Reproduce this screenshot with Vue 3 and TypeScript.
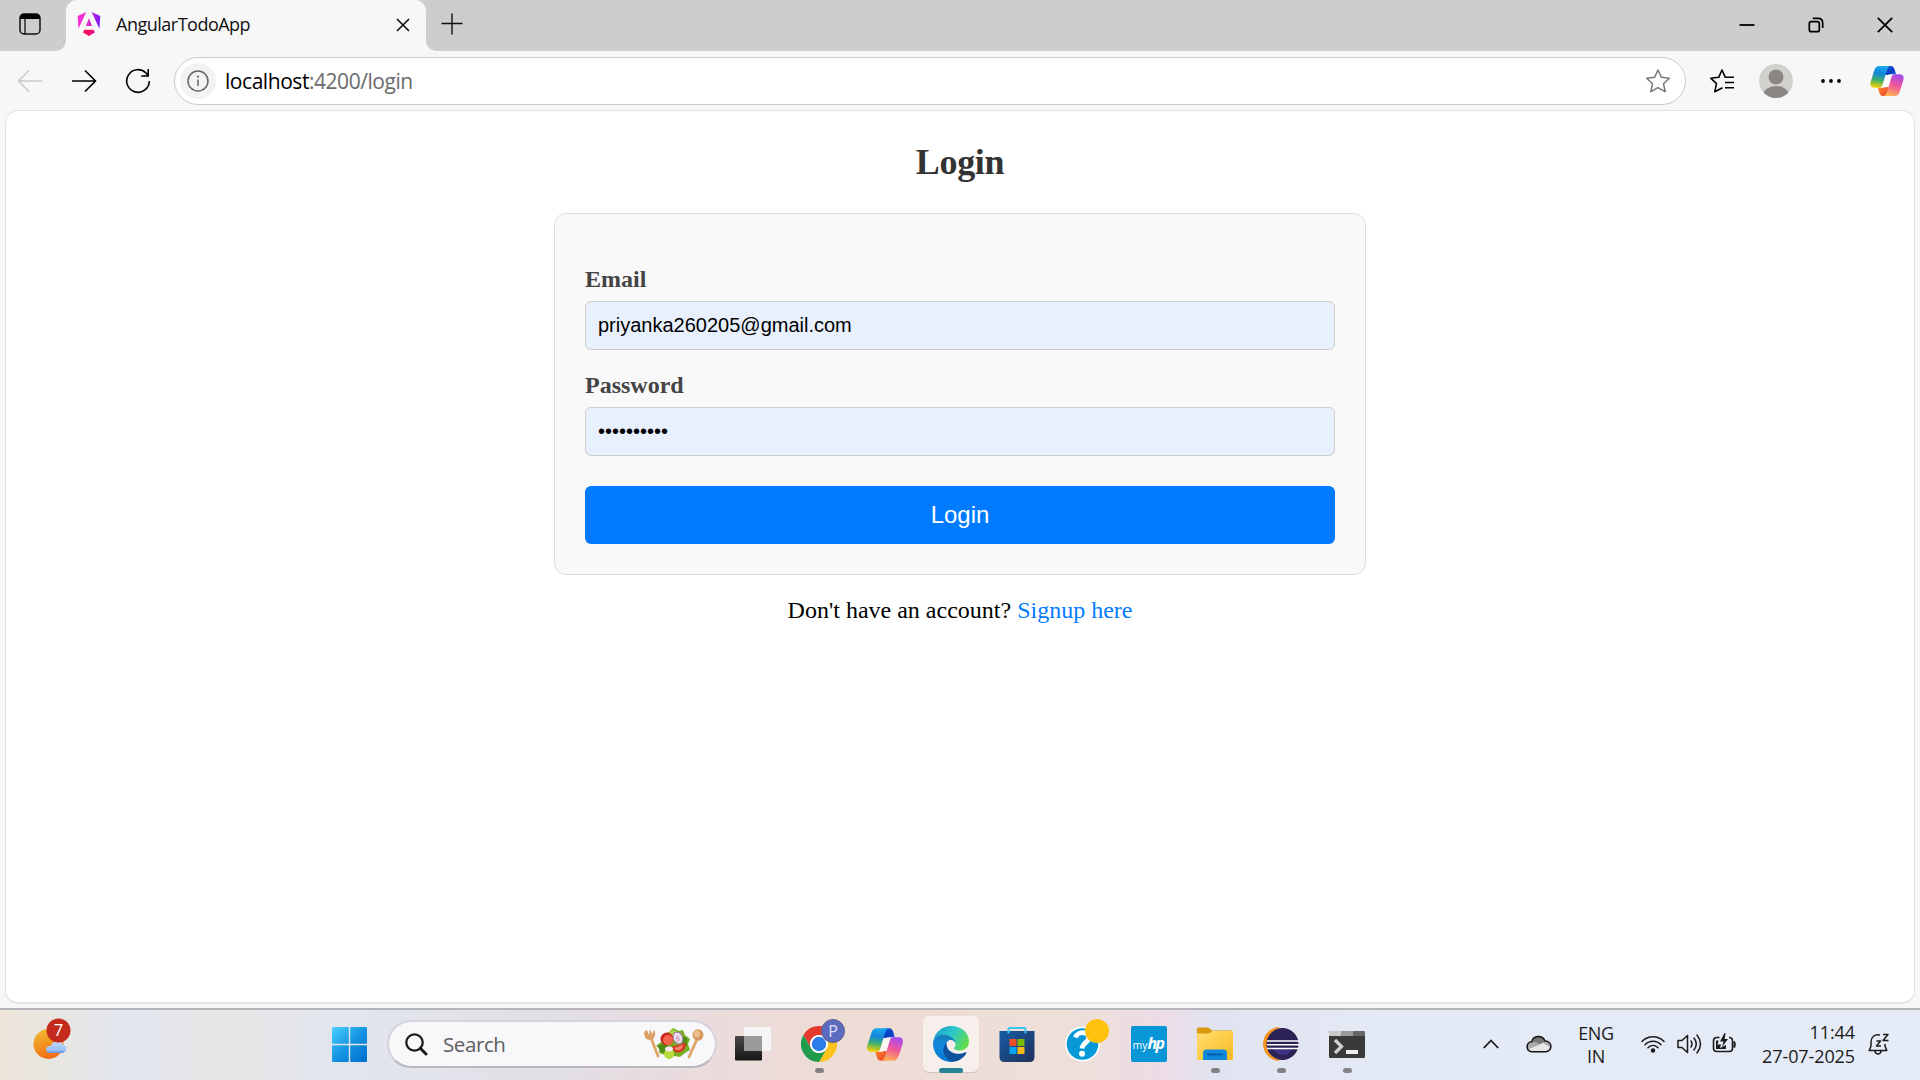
<script setup lang="ts">
import { ref } from 'vue'

const email = ref('priyanka260205@gmail.com')
const password = ref('••••••••••')
const tabTitle = 'AngularTodoApp'
const clock = { time: '11:44', date: '27-07-2025' }
</script>

<template>
  <div class="screen">
    <svg class="defs" width="0" height="0" aria-hidden="true">
      <defs>
        <linearGradient id="cpA" x1=".5" y1="0" x2=".35" y2="1">
          <stop offset="0" stop-color="#1ba7f0" /><stop offset=".35" stop-color="#1486d8" />
          <stop offset=".65" stop-color="#3fb06f" /><stop offset="1" stop-color="#f5d000" />
        </linearGradient>
        <linearGradient id="cpB" x1=".7" y1="0" x2=".4" y2="1">
          <stop offset="0" stop-color="#a34df0" /><stop offset=".5" stop-color="#f0569a" /><stop offset="1" stop-color="#ffb057" />
        </linearGradient>
        <linearGradient id="cpC" x1="0" y1="0" x2="1" y2="1">
          <stop offset="0" stop-color="#1358dc" /><stop offset=".6" stop-color="#0a3fc4" /><stop offset="1" stop-color="#1c5be0" />
        </linearGradient>
        <linearGradient id="cpD" x1="0" y1="0" x2="1" y2="1">
          <stop offset="0" stop-color="#ff8a2a" /><stop offset="1" stop-color="#e6392f" />
        </linearGradient>
        <symbol id="copilot" viewBox="0 0 100 90">
          <path fill="#fff" fill-opacity=".75" d="M48 26H68L54 65H34Z" />
          <path fill="url(#cpC)" d="M46 0H62C70 0 73 8 77 25H66C60 25 56 25 53 27L44 26Z" />
          <path fill="url(#cpD)" d="M54 90H38C30 90 27 82 23 65H34C40 65 44 65 47 63L56 64Z" />
          <path fill="url(#cpA)" d="M28 0H62C55 0 52 8 49 15L38 52C35 62 33 65 26 65H12C2 65-2 58 1 47L12 13C15 4 19 0 28 0Z" />
          <path fill="url(#cpB)" d="M72 90H38C45 90 48 82 51 75L62 38C65 28 67 25 74 25H88C98 25 102 32 99 43L88 77C85 86 81 90 72 90Z" />
        </symbol>
      </defs>
    </svg>

    <header class="titlebar">
      <div class="workspaces">
        <svg width="22" height="22" viewBox="0 0 22 22"><rect x="1" y="1" width="20" height="20" rx="4" fill="none" stroke="#111" stroke-width="1.5" /><path d="M1 6V4.5Q1 1 4.500 1H17.500Q21 1 21 4.500V6Z" fill="#000" /><path d="M6 6V21" stroke="#111" stroke-width="1.300" /></svg>
      </div>
      <div class="tab">
        <svg class="favicon" width="24" height="24" viewBox="0 0 223 236">
          <defs><linearGradient id="ngA" x1="0" y1=".4" x2="1" y2=".5"><stop offset="0" stop-color="#fb2fd4" /><stop offset=".5" stop-color="#e02ad0" /><stop offset="1" stop-color="#7716fa" /></linearGradient><linearGradient id="ngB" x1="0" y1="0" x2="1" y2=".4"><stop offset="0" stop-color="#f0087a" /><stop offset=".4" stop-color="#ff1052" /><stop offset="1" stop-color="#e20d92" /></linearGradient></defs>
          <path fill="url(#ngA)" d="m222.077 39.192-8.019 125.923L137.387 0l84.690 39.192ZM111.039 62.675l30.357 73.803H80.681l30.358-73.803ZM7.937 165.115 0 39.192 84.690 0 7.937 165.115Z" />
          <path fill="url(#ngB)" d="m168.972 202.017-57.933 33.056-57.934-33.056 11.783-28.556h92.301l11.783 28.556Z" />
        </svg>
        <span class="tab-title">{{ tabTitle }}</span>
        <svg class="tab-close" width="14" height="14" viewBox="0 0 14 14"><path d="M1 1 13 13M13 1 1 13" stroke="#111" stroke-width="1.600" /></svg>
      </div>
      <svg class="new-tab" width="22" height="22" viewBox="0 0 22 22"><path d="M11 .5V21.500M.5 10.500H21.500" stroke="#111" stroke-width="1.400" /></svg>
      <div class="window-controls">
        <svg width="16" height="16" viewBox="0 0 16 16"><path d="M.5 8H15.500" stroke="#000" stroke-width="1.800" /></svg>
        <svg width="16" height="16" viewBox="0 0 16 16" fill="none" stroke="#000" stroke-width="1.700"><rect x="1.300" y="4.700" width="10" height="10" rx="2" /><path d="M4.800 1.300H10Q14.700 1.300 14.700 6V11" /></svg>
        <svg width="16" height="16" viewBox="0 0 16 16"><path d="M.8.8 15.200 15.200M15.200.8.8 15.200" stroke="#000" stroke-width="1.800" /></svg>
      </div>
    </header>

    <nav class="toolbar">
      <div class="nav-buttons">
        <svg width="26" height="24" viewBox="0 0 26 24" fill="none" stroke="#c9c9c9" stroke-width="1.500"><path d="M25 12H1.500M12 1.500 1.500 12 12 22.500" /></svg>
        <svg width="26" height="24" viewBox="0 0 26 24" fill="none" stroke="#000" stroke-width="1.600"><path d="M1 12H24.500M14 1.500 24.500 12 14 22.500" /></svg>
        <svg width="26" height="26" viewBox="0 0 26 26" fill="none" stroke="#000" stroke-width="1.600"><path d="M24.300 13A11.300 11.300 0 1 1 21 5L23 7.500M23.200 1V8H16.200" /></svg>
      </div>
      <div class="address">
        <span class="site-info"><svg width="22" height="22" viewBox="0 0 22 22"><circle cx="11" cy="11" r="10" fill="none" stroke="#666" stroke-width="1.500" /><circle cx="11" cy="6.700" r="1.100" fill="#666" /><path d="M11 9.500V16" stroke="#666" stroke-width="1.500" /></svg></span>
        <span class="url"><b>localhost</b>:4200/login</span>
        <svg class="star" width="26" height="26" viewBox="0 0 26 26" fill="none" stroke="#767676" stroke-width="1.500" stroke-linejoin="round"><path d="M13 2 16.300 9.300 24.300 10.200 18.500 15.700 20.200 23.700 13 19.700 5.800 23.700 7.500 15.700 1.700 10.200 9.700 9.300Z" /></svg>
      </div>
      <div class="toolbar-actions">
        <svg width="26" height="26" viewBox="0 0 26 26" fill="none" stroke="#000" stroke-width="1.600" stroke-linejoin="round"><path d="M25 9.300H16.300L13 2 9.700 9.300 1.700 10.200 7.500 15.700 5.800 23.700 13.500 19.700M16 14.500H25M16 19.700H25" /></svg>
        <svg width="34" height="34" viewBox="0 0 34 34"><defs><clipPath id="avatarClip"><circle cx="17" cy="17" r="17" /></clipPath></defs><g clip-path="url(#avatarClip)"><rect width="34" height="34" fill="#d2d0cd" /><circle cx="17" cy="13" r="7.500" fill="#8a8683" /><ellipse cx="17" cy="31" rx="13" ry="9" fill="#8a8683" /></g></svg>
        <svg width="20" height="4" viewBox="0 0 20 4"><circle cx="2" cy="2" r="1.900" /><circle cx="10" cy="2" r="1.900" /><circle cx="18" cy="2" r="1.900" /></svg>
        <svg width="34" height="30"><use href="#copilot" /></svg>
      </div>
    </nav>

    <main class="viewport">
      <h2>Login</h2>
      <form class="card" @submit.prevent>
        <label for="email">Email</label>
        <input id="email" v-model="email" type="text" />
        <label for="password">Password</label>
        <input id="password" v-model="password" type="text" />
        <button type="submit">Login</button>
      </form>
      <p class="signup">Don't have an account? <a href="#">Signup here</a></p>
    </main>

    <footer class="taskbar">
      <div class="widgets">
        <svg width="40" height="44" viewBox="0 0 40 44">
          <defs><linearGradient id="sun" x1=".3" y1="0" x2=".6" y2="1"><stop offset="0" stop-color="#f0b92e" /><stop offset="1" stop-color="#f36c12" /></linearGradient><linearGradient id="cl" x1="0" y1="0" x2="0" y2="1"><stop offset="0" stop-color="#c1dcff" /><stop offset=".75" stop-color="#9cc0f7" /><stop offset="1" stop-color="#688fdc" /></linearGradient></defs>
          <circle cx="15.500" cy="26" r="15" fill="url(#sun)" /><path fill="url(#cl)" d="M17 35C11 35 12 27 18 28C20 21 29 22 30 27C35 27 34 35 29 35Z" />
          <circle cx="25.500" cy="12.500" r="12" fill="#c42b1c" />
          <text x="25.500" y="18" text-anchor="middle" fill="#fff" font-size="16.500" font-family="Open Sans, sans-serif">7</text>
        </svg>
      </div>
      <div class="slot start">
        <svg width="35" height="35" viewBox="0 0 35 35"><defs><linearGradient id="win" gradientUnits="userSpaceOnUse" x1="0" y1="0" x2="32" y2="32"><stop offset="0" stop-color="#4bd2ff" /><stop offset=".55" stop-color="#1594e2" /><stop offset="1" stop-color="#0074d0" /></linearGradient></defs><g fill="url(#win)"><rect width="16.800" height="16.800" rx="1" /><rect x="18.200" width="16.800" height="16.800" rx="1" /><rect y="18.200" width="16.800" height="16.800" rx="1" /><rect x="18.200" y="18.200" width="16.800" height="16.800" rx="1" /></g></svg>
      </div>
      <div class="search">
        <svg width="23" height="23" viewBox="0 0 23 23" fill="none" stroke="#1c1c1c"><circle cx="9.500" cy="9.500" r="8.200" stroke-width="2.300" /><path d="M15.300 15.300 21 21" stroke-width="3" stroke-linecap="round" /></svg>
        <span>Search</span>
        <svg class="salad" width="60" height="32" viewBox="0 0 60 32">
          <path d="M7 10 14 28M54 9 45 29" stroke="#dfa568" stroke-width="2.800" stroke-linecap="round" />
          <path d="M0 4 3 2 5 7 6 1 8 6 10 2C13 7 10 12 6 12C2 12 0 9 0 4Z" fill="#dca066" /><ellipse cx="54" cy="7" rx="5.500" ry="5.800" fill="#d69a60" /><ellipse cx="53" cy="6" rx="3" ry="3.500" fill="#edbd8b" />
          <path d="M12 18 17 14 19 7 25 4 29 0 35 3 39 2 41 7 46 11 44 16 46 22 41 25 36 29 30 28 25 31 21 27 15 25 16 21Z" fill="#79ad25" />
          <path d="M14 18 20 15 25 20 22 25 16 24ZM36 8 43 10 43 18 38 16Z" fill="#4f8b19" /><path d="M27 1 33 3 34 10 29 11 25 5Z" fill="#a7d34b" />
          <circle cx="23" cy="11" r="6.500" fill="#c9261b" /><circle cx="24" cy="12" r="5" fill="#f4654c" /><path d="M27 19 42 15C42 22 36 26 31 24Z" fill="#dc3021" /><path d="M30 20 39 17C39 21 35 23 32 22Z" fill="#f9866b" />
          <ellipse cx="34" cy="10" rx="4.500" ry="6" transform="rotate(-25 34 10)" fill="#eee4ef" stroke="#aa78ad" /><path d="M33 7 36 13M32 9 34 14" stroke="#b88dbc" />
          <circle cx="25" cy="26" r="5" fill="#b7dc3c" /><ellipse cx="25" cy="21" rx="4" ry="2.500" fill="#f5eaf1" />
        </svg>
      </div>
      <div class="slot">
        <svg width="36" height="36" viewBox="0 0 36 36"><defs><linearGradient id="tv" x1="0" y1="0" x2="0" y2="1"><stop offset="0" stop-color="#484848" /><stop offset="1" stop-color="#171717" /></linearGradient></defs><rect x="0" y="10" width="27" height="24.500" rx="1" fill="url(#tv)" /><rect x="9" y="1" width="27" height="24" rx="1" fill="#f5f5f5" /><rect x="9" y="10" width="18" height="15" fill="#9b9b9b" /></svg>
      </div>
      <div class="slot running">
        <svg width="36" height="36" viewBox="0 0 36 36"><path fill="#e33b2e" d="M18 9H33.600A18 18 0 0 0 2.400 9L10.200 22.500A9 9 0 0 1 18 9Z" /><path fill="#fcc31e" d="M33.600 9H18A9 9 0 0 1 25.800 22.500L18 36A18 18 0 0 0 33.600 9Z" /><path fill="#209a4b" d="M2.400 9 10.200 22.500A9 9 0 0 0 25.800 22.500L18 36A18 18 0 0 1 2.400 9Z" /><circle cx="18" cy="18" r="9" fill="#fff" /><circle cx="18" cy="18" r="7.200" fill="#2b7de9" /></svg>
        <span class="badge profile">P</span>
      </div>
      <div class="slot"><svg width="36" height="33"><use href="#copilot" /></svg></div>
      <div class="slot running active">
        <svg width="36" height="36" viewBox="0 0 36 36">
          <defs><linearGradient id="edA" x1="0" y1=".2" x2="1" y2=".6"><stop offset="0" stop-color="#159ed0" /><stop offset=".5" stop-color="#2fc7cd" /><stop offset="1" stop-color="#63dc48" /></linearGradient><linearGradient id="edB" x1=".4" y1="0" x2=".3" y2="1"><stop offset="0" stop-color="#157fb5" /><stop offset=".4" stop-color="#1288df" /><stop offset="1" stop-color="#0a78cf" /></linearGradient></defs>
          <path fill="url(#edA)" d="M.2 15.500C1.500 6.500 9 0 18 0C28.500 0 36 7 36 15.500C36 21 32 24.500 27 24.500C23 24.500 20.500 23.500 21 22C22 21 22.800 19.500 22.400 17C21 12 16 9 11 9C5 9 1 12 .2 15.500Z" />
          <path fill="url(#edB)" d="M0 18C0 12 5 8.800 11 8.800C17 8.800 22 12.500 22.500 17.500C21 13.500 16.500 12.800 14 16C10 22 12 32 21.500 35.600C19 36.200 17 36 15.500 35.800C6.500 34.500 0 27 0 18Z" />
          <path fill="#0d529b" d="M13.700 16.300C7.500 22 10 33.500 20.500 35.800C27 35 31.500 31 33.500 27C33.500 26 33 26 32 26.500C24 30 15 26.500 13.700 19.500C13.500 18 13.500 17 13.700 16.300Z" />
        </svg>
      </div>
      <div class="slot">
        <svg width="36" height="36" viewBox="0 0 36 36"><defs><linearGradient id="store" x1="0" y1="0" x2="1" y2="1"><stop offset="0" stop-color="#135ca4" /><stop offset="1" stop-color="#23305b" /></linearGradient></defs><path d="M9.500 8V3Q9.500 2 10.500 2H25.500Q26.500 2 26.500 3V8" fill="none" stroke="#3cc5f3" stroke-width="2" /><path d="M.5 5H35.500V31Q35.500 36 30.500 36H5.500Q.5 36 .5 31Z" fill="url(#store)" /><path d="M9.500 5V7.500M26.500 5V7.500" stroke="#3cc5f3" stroke-width="2" /><path fill="#f2502a" d="M10.500 13h7v7h-7z" /><path fill="#7db900" d="M18.500 13h7v7h-7z" /><path fill="#05a5ef" d="M10.500 21h7v7h-7z" /><path fill="#fcb713" d="M18.500 21h7v7h-7z" /></svg>
      </div>
      <div class="slot">
        <svg width="36" height="36" viewBox="0 0 36 36"><circle cx="17.500" cy="18" r="17.500" fill="#fff" /><circle cx="17.500" cy="18" r="15.800" fill="#0798d8" /><path d="M10.500 11.500C13 4.500 25 5.500 23.500 12.500C23 16.500 17.500 17 17 22.500" fill="none" stroke="#fff" stroke-width="4.800" /><circle cx="17" cy="27.700" r="3" fill="#fff" /></svg>
        <span class="badge notice"></span>
      </div>
      <div class="slot"><div class="myhp"><span>my</span><b>hp</b></div></div>
      <div class="slot running">
        <svg width="36" height="34" viewBox="0 0 36 34"><defs><linearGradient id="fd" x1="0" y1="0" x2="1" y2="1"><stop offset="0" stop-color="#ffdf73" /><stop offset="1" stop-color="#fbb91e" /></linearGradient></defs><path d="M0 2Q0 .5 1.500.5H11Q12 .5 15 3.500H35V12H0Z" fill="#d99b0c" /><path d="M0 6.500H11Q13 6.500 15 4H35Q36 4 36 5V31.500Q36 33 34.500 33H1.500Q0 33 0 31.500Z" fill="url(#fd)" /><path d="M6 33V26Q6 22.500 9.500 22.500H26.500Q30 22.500 30 26V33Z" fill="#1089dc" /><path d="M11 27.500H25" stroke="#07519b" stroke-width="1.500" stroke-linecap="round" /></svg>
      </div>
      <div class="slot running">
        <svg width="36" height="34" viewBox="0 0 36 34"><path d="M17 0A17 17 0 0 0 17 34A20 20 0 0 1 17 0Z" fill="#f7941e" /><circle cx="19.500" cy="17" r="16" fill="#2c2255" /><path d="M10 22H29Q26 28 19.500 28Q13 28 10 22Z" fill="#403082" /><path d="M4 14H36M4 17.800H36M4 21.600H36" stroke="#fff" stroke-width="1.500" /></svg>
      </div>
      <div class="slot running">
        <svg width="36" height="27" viewBox="0 0 36 27"><rect width="36" height="27" rx="1.500" fill="#3a3a3a" /><path d="M0 5V1.500Q0 0 1.500 0H12V5Z" fill="#c9c9c9" /><path d="M12 0H24V5H12Z" fill="#999" /><path d="M24 0H34.500Q36 0 36 1.500V5H24Z" fill="#666" /><path d="m6 9 6.500 6.500L6 22" fill="none" stroke="#d2d2d2" stroke-width="3.200" /><rect x="17" y="19" width="12" height="4" fill="#eee" /></svg>
      </div>

      <div class="tray">
        <div class="cell wide"><svg width="16" height="10" viewBox="0 0 16 10"><path d="M.8 9 8 1.500 15.200 9" fill="none" stroke="#1b1b1b" stroke-width="1.800" /></svg></div>
        <div class="cell wide"><svg width="26" height="18" viewBox="0 0 26 18"><path d="M6 16.800C-.5 16.800-.5 7 5.800 6.800C7 0 16.500-.5 19 6C27 6 26.500 16.800 19.500 16.800Z" fill="#a9a9a9" /><path d="M6 16.800 3 14 17 8 24 12 19.500 16.800Z" fill="#e7e7e7" /><path d="M6 7C9 6 11 8 14 9L19 6C16-1 7 0 6 7Z" fill="#777" /><path d="M6 16.800C-.5 16.800-.5 7 5.800 6.800C7 0 16.500-.5 19 6C27 6 26.500 16.800 19.500 16.800Z" fill="none" stroke="#111" stroke-width="1.500" /></svg></div>
        <div class="lang"><span>ENG</span><span>IN</span></div>
        <div class="cell"><svg width="24" height="18" viewBox="0 0 24 18" fill="none" stroke="#1b1b1b" stroke-width="1.500" stroke-linecap="round"><path d="M1 6.500C7 .1 17 .1 23 6.500M4 9.700C8.500 5 15.500 5 20 9.700M7 12.700C10 9.800 14 9.800 17 12.700" /><circle cx="12" cy="15.500" r="1.500" fill="#1b1b1b" /></svg></div>
        <div class="cell"><svg width="26" height="22" viewBox="0 0 26 22" fill="none" stroke="#1b1b1b" stroke-width="1.500" stroke-linejoin="round" stroke-linecap="round"><path d="M2 7.500H6L11.500 2.500V19.500L6 14.500H2ZM15 8Q17 11 15 14M18 5Q22.500 11 18 17M21 2Q28 11 21 20" /></svg></div>
        <div class="cell battery"><svg width="24" height="20" viewBox="0 0 24 20"><path d="M7.500 4.500H5Q1.500 4.500 1.500 8V15Q1.500 18.500 5 18.500H17Q20.500 18.500 20.500 15V8Q20.500 4.500 17 4.500" fill="none" stroke="#1b1b1b" stroke-width="1.600" /><path d="M22 8.500Q23.500 11.500 22 14.500" fill="none" stroke="#1b1b1b" stroke-width="2" /><path d="M4 7.500H6.500L5.500 11.500H9L8 15L14 12V16H4Z" fill="#1b1b1b" /><path d="M12.500 0 8 8.500H11.500L10 14 16 6H12.700L13.500 0Z" fill="#1b1b1b" /></svg></div>
        <div class="clock"><span>{{ clock.time }}</span><span>{{ clock.date }}</span></div>
        <svg class="bell" width="22" height="24" viewBox="0 0 22 24" fill="none" stroke="#1b1b1b" stroke-width="1.500" stroke-linejoin="round"><path d="M12 3C6.500 2 3 5 3 10V14L1.200 18.500H18.800L17 14V12M6.800 18.800Q7.500 22 10 22Q12.500 22 13.200 18.800M8.500 9H12.500L8.500 14H13M15 2.500H20L15 8.500H20.500" /></svg>
      </div>
    </footer>
  </div>
</template>

<style>
html, body { margin: 0; overflow: hidden; }
</style>

<style scoped>
* { box-sizing: border-box; }
svg { display: block; flex: none; }
.defs { position: absolute; }
.screen { width: 1920px; height: 1080px; display: flex; flex-direction: column; background: #f7f7f7; font-family: 'Open Sans', 'Noto Sans', sans-serif; overflow: hidden; }

.titlebar { height: 51px; display: flex; background: #cdcdcd; flex: none; }
.workspaces { width: 66px; padding: 13px 0 0 19px; }
.tab { position: relative; width: 360px; height: 51px; display: flex; align-items: center; padding: 0 16px 3px 11px; background: #f7f7f7; border-radius: 11px 11px 0 0; }
.tab::before, .tab::after { content: ''; position: absolute; bottom: 0; width: 10px; height: 10px; }
.tab::before { left: -10px; background: radial-gradient(circle at 0 0, transparent 9.5px, #f7f7f7 10px); }
.tab::after { right: -10px; background: radial-gradient(circle at 100% 0, transparent 9.5px, #f7f7f7 10px); }
.tab-title { margin: -1px 0 0 15px; font-size: 18px; letter-spacing: -0.5px; color: #111; line-height: 24px; }
.tab-close { margin-left: auto; margin-top: 1px; }
.new-tab { margin: 13px 0 0 15px; }
.window-controls { display: flex; gap: 53px; margin: 17px 27px 0 auto; }

.toolbar { height: 60px; display: flex; align-items: center; flex: none; padding-bottom: 1px; }
.nav-buttons { width: 174px; display: flex; align-items: center; gap: 28px; padding-left: 17px; }
.address { width: 1512px; height: 48px; border: 1px solid #cbcbcb; border-radius: 24px; background: #fff; display: flex; align-items: center; padding: 0 14px 0 5px; }
.site-info { width: 36px; height: 36px; border-radius: 50%; background: #f3f3f3; display: flex; align-items: center; justify-content: center; }
.url { margin-left: 9px; font-size: 21px; letter-spacing: -0.45px; color: #6a6a6a; }
.url b { font-weight: 400; color: #000; }
.star { margin-left: auto; }
.toolbar-actions { display: flex; align-items: center; flex: 1; padding-left: 23px; }
.toolbar-actions svg:nth-child(2) { margin-left: 24px; }
.toolbar-actions svg:nth-child(3) { margin-left: 28px; }
.toolbar-actions svg:nth-child(4) { margin-left: 29px; }

.viewport { width: 1910px; height: 894px; margin: -1px 0 0 5px; flex: none; background: #fff; border: 1px solid #e3e3e3; border-bottom: 2px solid #e2e2e2; border-radius: 13px; display: flex; flex-direction: column; align-items: center; font-family: 'Liberation Serif', serif; }
h2 { margin: 30px 0; font-size: 36px; line-height: 42px; letter-spacing: -0.3px; color: #333; }
.card { width: 812px; height: 362px; padding: 52px 30px 30px; border: 1px solid #ddd; border-radius: 12px; background: #f9f9f9; display: flex; flex-direction: column; }
label { font-size: 24px; line-height: 27px; font-weight: 700; color: #444; margin-bottom: 8px; }
input { height: 49px; flex: none; margin: 0 0 22px; padding: 0 12px; border: 1px solid #ccc; border-radius: 6px; background: #e8f0fe; color: #000; font: 20px 'Liberation Sans', sans-serif; outline: none; }
#password { padding-bottom: 1px; }
button { margin-top: 8px; height: 58px; flex: none; border: 0; border-radius: 6px; background: #007bff; color: #fff; font: 24px 'Liberation Sans', sans-serif; }
.signup { margin: 22px 0 0; font-size: 24px; line-height: 27px; color: #000; }
.signup a { color: #007bff; text-decoration: none; }

.taskbar { height: 72px; margin-top: auto; padding-bottom: 2px; flex: none; display: flex; align-items: center; border-top: 2px solid #b5b5b9; background: linear-gradient(90deg, #eee5da 0, #e7e6e2 60px, #e3e6f1 130px, #e6e6e4 220px, #e1e5ef 350px, #e2e4ec 420px, #e1dfe6 550px, #eadbdd 690px, #eedcd6 840px, #eedfd9 1070px, #eddce6 1160px, #e1e3f0 1210px, #e3eaf6 1400px, #e5ebf7 1920px); }
.widgets { width: 316px; padding-left: 33px; height: 52px; }
.slot { position: relative; width: 66px; height: 68px; display: flex; align-items: center; justify-content: center; flex: none; }
.search { width: 330px; height: 48px; margin: 0 3px 0 5px; padding: 0 12px 0 16px; flex: none; display: flex; align-items: center; border: 2px solid #d5d4de; border-bottom-color: #b9b8bf; border-radius: 24px; background: #f8f8fb; background-clip: padding-box; }
.search span { margin-left: 15px; font-size: 20.5px; color: #5d5d5d; letter-spacing: -0.4px; }
.salad { margin-left: auto; margin-right: -1px; }
.running::after { content: ''; position: absolute; left: 28.5px; bottom: 5px; width: 9px; height: 5px; border-radius: 3px; background: #858285; }
.active::before { content: ''; position: absolute; left: 5px; top: 6px; width: 56px; height: 56px; border-radius: 6px; background: #f7efec; box-shadow: 0 1px 1px #cfc3bf; }
.active svg { position: relative; }
.active::after { left: 21px; width: 24px; background: #268494; }
.badge { position: absolute; top: 9px; left: 35px; width: 24px; height: 24px; border-radius: 50%; }
.profile { background: #5c6bc0; color: #dfe3fa; font-size: 16px; text-align: center; border: 1px solid #616087; line-height: 22px; }
.notice { background: #ffc20d; }
.myhp { width: 36px; height: 36px; border-radius: 2px; background: #0796d6; color: #fff; display: flex; align-items: baseline; justify-content: center; line-height: 34px; }
.myhp span { font-size: 10.5px; }
.myhp b { font-size: 16px; font-style: italic; letter-spacing: -1.5px; padding-right: 2px; }

.tray { display: flex; align-items: center; margin-left: auto; color: #1b1b1b; padding-right: 30px; }
.cell { width: 36px; display: flex; justify-content: center; }
.wide { width: 48px; }
.battery { padding: 0 2px 2px 0; }
.lang, .clock { display: flex; flex-direction: column; font-size: 18px; }
.lang { width: 72px; padding: 1px 6px 0 0; align-items: center; line-height: 23px; letter-spacing: -0.4px; }
.clock { width: 112px; align-items: flex-end; line-height: 24px; letter-spacing: -0.1px; }
.bell { margin-left: 13px; }
</style>
